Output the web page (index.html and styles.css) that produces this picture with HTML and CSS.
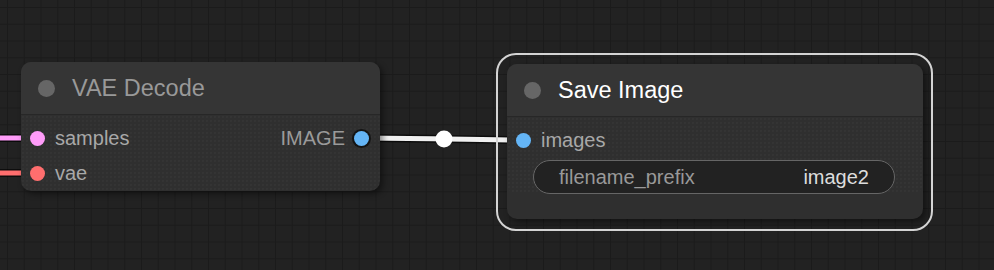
FILE: index.html
```html
<!DOCTYPE html>
<html lang="en">
<head>
  <meta charset="UTF-8">
  <title>Node Graph</title>
  <link rel="stylesheet" href="styles.css">
</head>
<body>

  <div class="canvas">

    <!-- Links (drawn under the nodes) -->
    <svg class="links" width="994" height="270" viewBox="0 0 994 270">
      <path class="link-shadow" d="M -10 138 L 30 138" />
      <path class="link latent" d="M -10 138 L 30 138" />
      <path class="link-shadow" d="M -10 173 L 30 173" />
      <path class="link vae" d="M -10 173 L 30 173" />
      <path class="link-shadow" d="M 361 138 C 420 138, 470 140, 524 140" />
      <path class="link image" d="M 361 138 C 420 138, 470 140, 524 140" />
      <circle class="link-center" cx="444" cy="139" r="8.5" />
    </svg>

    <!-- VAE Decode -->
    <div class="node" style="left: 21px; top: 62px; width: 359px;">
      <div class="node-title">
        <span class="title-dot"></span>
        <span class="title-text">VAE Decode</span>
      </div>
      <div class="node-body">
        <div class="slot-row">
          <div class="slot slot-in"><span class="dot latent"></span>samples</div>
          <div class="slot slot-out">IMAGE<span class="dot image out-dot"></span></div>
        </div>
        <div class="slot-row">
          <div class="slot slot-in"><span class="dot vae"></span>vae</div>
        </div>
      </div>
    </div>

    <!-- Save Image (selected) -->
    <div class="node selected" style="left: 507px; top: 64px; width: 416px;">
      <div class="node-title">
        <span class="title-dot"></span>
        <span class="title-text">Save Image</span>
      </div>
      <div class="node-body">
        <div class="slot-row">
          <div class="slot slot-in"><span class="dot image"></span>images</div>
        </div>
        <div class="widget">
          <span class="widget-label">filename_prefix</span>
          <span class="widget-value">image2</span>
        </div>
      </div>
    </div>

  </div>

</body>
</html>
```

FILE: styles.css
```css
body {
  margin: 0;
  background: #222;
  font-family: "Liberation Sans", Arial, sans-serif;
  overflow: hidden;
}

.canvas {
  position: relative;
  width: 994px;
  height: 270px;
  overflow: hidden;
  background-color: #222;
  background-image:
    linear-gradient(to right, #1b1b1b 1px, transparent 1px),
    linear-gradient(to bottom, #1b1b1b 1px, transparent 1px);
  background-size: 16.75px 16.75px;
  background-position: 7px 7px;
}

.links {
  position: absolute;
  left: 0;
  top: 0;
}

.link-shadow {
  fill: none;
  stroke: rgba(0, 0, 0, 0.6);
  stroke-width: 8;
}

.link {
  fill: none;
  stroke-width: 5;
}

.link.latent { stroke: #ff9cf9; }
.link.vae { stroke: #ff6e6e; }
.link.image { stroke: #f0f0f0; }

.link-center {
  fill: #fff;
}

/* Nodes */
.node {
  position: absolute;
  border-radius: 10px;
  background: #2f2f2f;
  box-shadow: 3px 3px 6px rgba(0, 0, 0, 0.45);
}

.node.selected::before {
  content: "";
  position: absolute;
  left: -11px;
  top: -11px;
  right: -10px;
  bottom: -12px;
  border: 2px solid #d4d4d4;
  border-radius: 20px;
  pointer-events: none;
}

.node-title {
  height: 52px;
  display: flex;
  align-items: center;
  gap: 17px;
  padding-left: 17px;
  background: #353535;
  border-radius: 10px 10px 0 0;
  border-bottom: 1px solid #272727;
}

.title-dot {
  width: 17px;
  height: 17px;
  border-radius: 50%;
  background: #666;
  flex: none;
}

.title-text {
  font-size: 23.5px;
  color: #999;
}

.node.selected .title-text {
  color: #fff;
}

.node-body {
  padding: 6px 0 0;
  border-radius: 0 0 10px 10px;
  background-image: radial-gradient(rgba(255, 255, 255, 0.025) 0.7px, transparent 0.9px);
  background-size: 4px 4px;
}

.slot-row {
  height: 35px;
  display: flex;
  align-items: center;
  justify-content: space-between;
}

.slot {
  display: flex;
  align-items: center;
  font-size: 20px;
  color: #a8a8a8;
}

.slot-in {
  padding-left: 9px;
  gap: 10px;
}

.slot-out {
  padding-right: 11px;
  gap: 9px;
  color: #9a9a9a;
}

.dot {
  width: 15px;
  height: 15px;
  border-radius: 50%;
  flex: none;
}

.dot.latent { background: #ff9cf9; }
.dot.vae { background: #ff6e6e; }
.dot.image { background: #64b5f6; }

.out-dot {
  box-shadow: 0 0 0 2px #141414;
}

.widget {
  height: 34px;
  box-sizing: border-box;
  margin: 2px 28px 25px 26px;
  padding: 0 25px;
  display: flex;
  align-items: center;
  justify-content: space-between;
  background: #222;
  border: 1px solid #666;
  border-radius: 17px;
  font-size: 20px;
}

.widget-label {
  color: #999;
}

.widget-value {
  color: #ddd;
}
```
